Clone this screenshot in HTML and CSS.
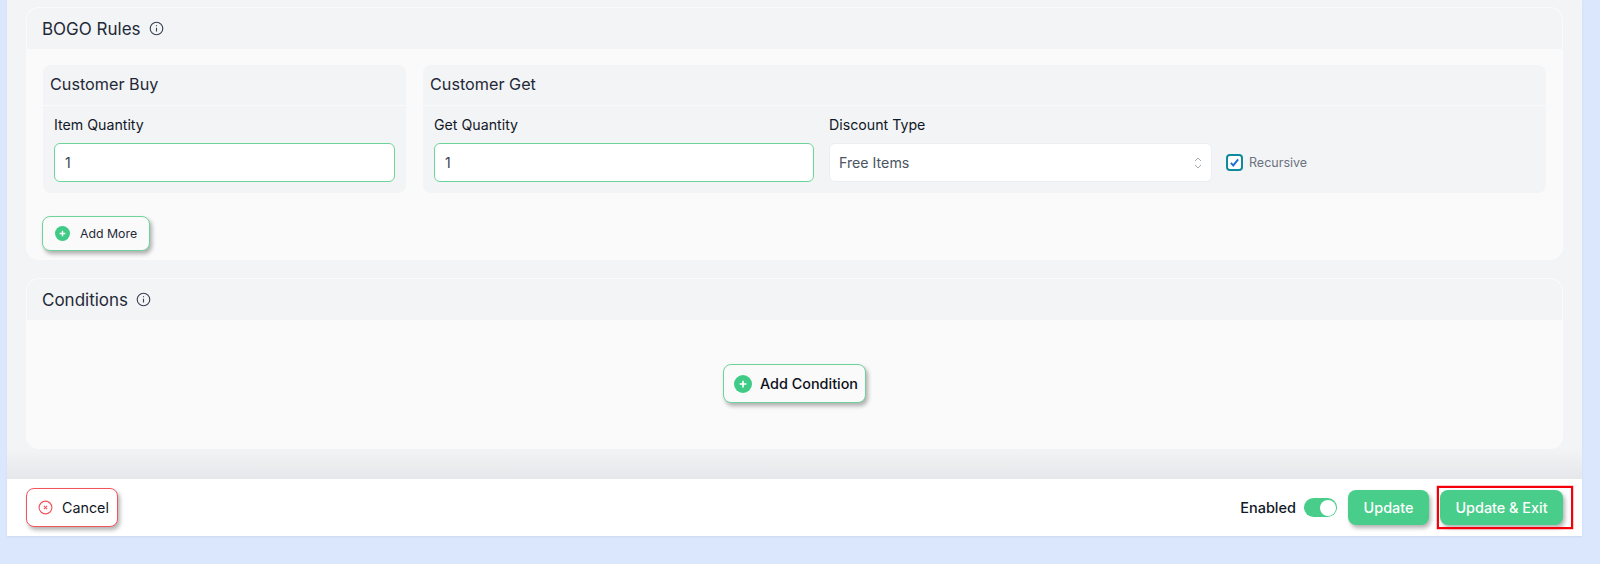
FILE: index.html
```html
<!DOCTYPE html>
<html lang="en">
<head>
<meta charset="utf-8">
<title>BOGO Rules</title>
<link rel="stylesheet" href="styles.css">
</head>
<body>
<div class="window">
  <main class="main">
    <section class="card">
      <header class="card-head">
        <h2>BOGO Rules</h2>
        <svg class="info" viewBox="0 0 16 16"><circle cx="8" cy="8" r="6.7"/><path d="M8 7.3v4M8 4.6v1"/></svg>
      </header>
      <div class="card-body">
        <div class="rule-row">
          <div class="panel panel-buy">
            <h3>Customer Buy</h3>
            <div class="fields">
              <div class="field field-buy">
                <label>Item Quantity</label>
                <div class="input">1</div>
              </div>
            </div>
          </div>
          <div class="panel panel-get">
            <h3>Customer Get</h3>
            <div class="fields">
              <div class="field field-get">
                <label>Get Quantity</label>
                <div class="input">1</div>
              </div>
              <div class="field field-type">
                <label>Discount Type</label>
                <div class="select">
                  <span>Free Items</span>
                  <svg class="chev" viewBox="0 0 10 16"><path d="M2 6l3-3 3 3M2 10l3 3 3-3"/></svg>
                </div>
              </div>
              <div class="recursive">
                <span class="checkbox"><svg viewBox="0 0 16 16"><path d="M3.500 8.400l3 3.200L12.500 4.200"/></svg></span>
                <span>Recursive</span>
              </div>
            </div>
          </div>
        </div>
        <button class="btn-add btn-more">
          <svg class="plus" viewBox="0 0 16 16"><circle cx="8" cy="8" r="8"/><path d="M8 5v6M5 8h6"/></svg>
          Add More
        </button>
      </div>
    </section>
    <section class="card">
      <header class="card-head">
        <h2>Conditions</h2>
        <svg class="info" viewBox="0 0 16 16"><circle cx="8" cy="8" r="6.7"/><path d="M8 7.3v4M8 4.6v1"/></svg>
      </header>
      <div class="card-body cond-body">
        <button class="btn-add btn-cond">
          <svg class="plus plus-lg" viewBox="0 0 16 16"><circle cx="8" cy="8" r="8"/><path d="M8 5v6M5 8h6"/></svg>
          Add Condition
        </button>
      </div>
    </section>
  </main>
  <footer class="footer">
    <button class="btn-cancel">
      <svg class="cancel-icon" viewBox="0 0 16 16"><circle cx="8" cy="8" r="6.8"/><path d="M6.3 6.3l3.4 3.4M9.700 6.3l-3.400 3.400"/></svg>
      Cancel
    </button>
    <div class="actions">
      <span class="enabled">Enabled</span>
      <span class="toggle"><span class="knob"></span></span>
      <button class="btn-solid btn-update">Update</button>
      <button class="btn-solid btn-exit">Update &amp; Exit</button>
    </div>
    <div class="highlight"></div>
  </footer>
</div>
</body>
</html>
```
FILE: styles.css
```css
* { box-sizing: border-box; }
html, body { margin: 0; padding: 0; height: 564px; overflow: hidden; }
body {
  background: #dae7fd;
  font-family: Inter, "Liberation Sans", sans-serif;
  color: #1f2937;
  padding-left: 7px;
}
.window {
  width: 1575px;
  height: 536px;
  background: #f3f4f6;
  display: flex;
  flex-direction: column;
  box-shadow: 0 1px 2px rgba(0,0,0,.06);
}
.main {
  height: 479px;
  padding: 8px 20px 0 20px;
  display: flex;
  flex-direction: column;
  gap: 20px;
  background: linear-gradient(to bottom, #f3f4f6 0, #f3f4f6 448px, #e6e7ea 479px);
}
.card {
  background: #fafafa;
  border-radius: 12px;
  box-shadow: 0 0 0 1px #fbfbfc;
  overflow: hidden;
}
.card-head {
  height: 41px;
  padding: 0 15px;
  background: #f3f4f6;
  display: flex;
  align-items: center;
  gap: 8px;
}
.card-head h2 {
  margin: 0;
  font-size: 17px;
  font-weight: 400;
  line-height: 24px;
  color: #1f2937;
}
.info {
  width: 15px;
  height: 15px;
  fill: none;
  stroke: #374151;
  stroke-width: 1.2;
}
.card-body { padding: 16px 16px 0 16px; height: 210px; }
.rule-row { display: flex; gap: 17px; }
.panel {
  background: #f3f4f6;
  border-radius: 8px;
  height: 128px;
  overflow: hidden;
}
.panel-buy { width: 363px; }
.panel-get { width: 1123px; }
.panel h3 {
  margin: 0;
  height: 41px;
  padding: 0 7px;
  font-size: 16.2px;
  font-weight: 400;
  line-height: 39px;
  color: #1f2937;
  border-bottom: 1px solid #fafafa;
}
.fields { display: flex; padding: 0 11px; align-items: flex-start; }
.field label {
  display: block;
  height: 37px;
  font-size: 14.2px;
  line-height: 38px;
  color: #111827;
}
.field-buy { width: 341px; }
.field-get { width: 380px; margin-right: 15px; }
.field-type { width: 383px; }
.input {
  height: 39px;
  background: #fff;
  border: 1px solid #6ed39b;
  border-radius: 6px;
  padding: 0 10px;
  font-size: 14px;
  line-height: 37px;
  color: #374151;
}
.select {
  height: 39px;
  background: #fff;
  border: 1px solid #eceef1;
  border-radius: 6px;
  padding: 0 8px 0 9px;
  font-size: 14.2px;
  color: #4b5563;
  display: flex;
  align-items: center;
  justify-content: space-between;
}
.chev {
  width: 10px;
  height: 16px;
  fill: none;
  stroke: #a3a9b3;
  stroke-width: 1;
}
.recursive {
  display: flex;
  align-items: center;
  gap: 6px;
  margin: 48px 0 0 14px;
  font-size: 12.5px;
  color: #6b7280;
}
.checkbox {
  width: 17px;
  height: 17px;
  border: 2px solid #0f8a9d;
  border-radius: 4px;
  background: #fff;
  display: flex;
}
.checkbox svg {
  width: 100%;
  height: 100%;
  fill: none;
  stroke: #1d6fd1;
  stroke-width: 2.4;
}
.btn-add {
  display: flex;
  align-items: center;
  background: #fafafa;
  border: 1px solid #6ed39b;
  border-radius: 8px;
  box-shadow: 2px 3px 4px rgba(0,0,0,.3);
  font-family: inherit;
  color: #1f2937;
  padding: 0;
}
.btn-more {
  width: 108px;
  height: 35px;
  margin: 23px 0 0 -1px;
  padding-left: 12px;
  gap: 10px;
  font-size: 12.3px;
}
.plus { width: 15px; height: 15px; fill: #3fcb85; stroke: none; }
.plus path { stroke: #fff; stroke-width: 1.5; fill: none; }
.cond-body {
  height: 128px;
  padding: 44px 0 0 0;
  display: flex;
  justify-content: center;
}
.btn-cond {
  width: 143px;
  height: 39px;
  padding-left: 10px;
  gap: 8px;
  font-size: 14.4px;
  font-weight: 500;
  color: #0b0f19;
}
.plus-lg { width: 18px; height: 18px; }
.footer {
  position: relative;
  height: 57px;
  background: #fff;
  padding: 9px 19px 0 19px;
  display: flex;
  justify-content: space-between;
  align-items: flex-start;
}
.btn-cancel {
  width: 92px;
  height: 39px;
  display: flex;
  align-items: center;
  gap: 9px;
  padding: 0 0 0 11px;
  background: #fff;
  border: 1px solid #f2545b;
  border-radius: 8px;
  box-shadow: 2px 3px 4px rgba(0,0,0,.3);
  font-family: inherit;
  font-size: 14.3px;
  color: #111827;
}
.cancel-icon {
  width: 15px;
  height: 15px;
  fill: none;
  stroke: #f2545b;
  stroke-width: 1.2;
}
.actions { display: flex; align-items: center; height: 35px; margin-top: 2px; }
.enabled { font-size: 14.5px; font-weight: 500; color: #111827; margin-right: 8px; }
.toggle {
  width: 33px;
  height: 19px;
  border-radius: 10px;
  background: #48cd8a;
  display: flex;
  justify-content: flex-end;
  padding: 1.5px;
  margin-right: 11px;
}
.knob { width: 16px; height: 16px; background: #fff; border-radius: 50%; }
.btn-solid {
  height: 35px;
  border: 0;
  border-radius: 8px;
  background: #48cd8a;
  color: #fff;
  font-family: inherit;
  font-size: 14.4px;
  font-weight: 500;
  box-shadow: 2px 3px 4px rgba(0,0,0,.3);
  padding: 0;
}
.btn-update { width: 81px; margin-right: 11px; }
.btn-exit { width: 123px; }
.highlight {
  position: absolute;
  left: 1430px;
  top: 7px;
  width: 136px;
  height: 43px;
  border: 2px solid #f5000a;
  box-shadow: 0 0 0 .5px rgba(245,0,10,.45);
}
```
